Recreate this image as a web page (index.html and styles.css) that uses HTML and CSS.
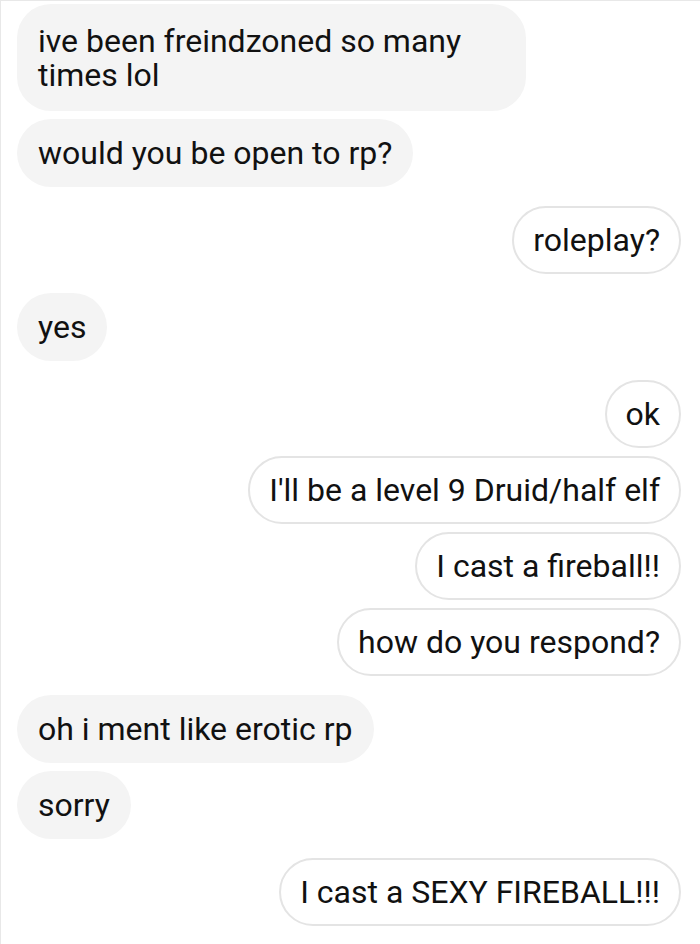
FILE: index.html
```html
<!DOCTYPE html>
<html lang="en">
<head>
  <meta charset="UTF-8">
  <meta name="viewport" content="width=device-width, initial-scale=1.0">
  <title>Chat</title>
  <link rel="stylesheet" href="styles.css">
</head>
<body>

  <div class="chat">
    <!-- them -->
    <div class="msg them wide">ive been freindzoned so many times lol</div>
    <div class="msg them">would you be open to rp?</div>

    <!-- me -->
    <div class="msg me new">roleplay?</div>

    <div class="msg them new">yes</div>

    <div class="msg me new">ok</div>
    <div class="msg me">I'll be a level 9 Druid/half elf</div>
    <div class="msg me">I cast a fireball!!</div>
    <div class="msg me">how do you respond?</div>

    <div class="msg them new">oh i ment like erotic rp</div>
    <div class="msg them">sorry</div>

    <div class="msg me new">I cast a SEXY FIREBALL!!!</div>
  </div>

</body>
</html>
```

FILE: styles.css
```css
:root {
  --bubble: #f4f4f4;
  --line: #e4e4e4;
  --text: #111;
}
*, *::before, *::after { box-sizing: border-box; margin: 0; padding: 0; }
body {
  background: #fff;
  font-family: Roboto, "Noto Sans", Arial, sans-serif;
  color: var(--text);
}

.chat {
  display: flex; flex-direction: column;
  gap: 8px;
  padding: 3px 19px 16px 16px;
  min-height: 944px;
  border-top: 1px solid #e8e8e8;
  border-left: 1px solid #e8e8e8;
}

.msg {
  font-size: 32px;
  line-height: 34px;
  padding: 17px 21px;
  border-radius: 34px;
  max-width: 509px;
}
.msg.them {
  align-self: flex-start;
  background: var(--bubble);
}
.msg.me {
  align-self: flex-end;
  background: #fff;
  border: 2px solid var(--line);
  padding: 15px 19px;
}
.msg.wide { width: 509px; padding-top: 20px; padding-bottom: 19px; line-height: 34px; }
.msg.new { margin-top: 11px; }
```
